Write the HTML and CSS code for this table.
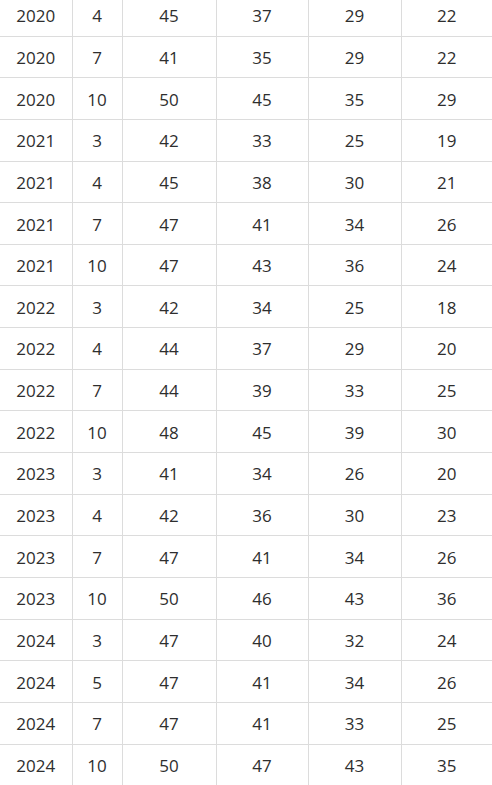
FILE: index.html
```html
<!DOCTYPE html>
<html>
<head>
<meta charset="utf-8">
<link rel="stylesheet" href="styles.css">
</head>
<body>
<table class="data">
<colgroup>
<col class="c1"><col class="c2"><col class="c3"><col class="c4"><col class="c5"><col class="c6">
</colgroup>
<tbody>
<tr><td>2020</td><td>4</td><td>45</td><td>37</td><td>29</td><td>22</td></tr>
<tr><td>2020</td><td>7</td><td>41</td><td>35</td><td>29</td><td>22</td></tr>
<tr><td>2020</td><td>10</td><td>50</td><td>45</td><td>35</td><td>29</td></tr>
<tr><td>2021</td><td>3</td><td>42</td><td>33</td><td>25</td><td>19</td></tr>
<tr><td>2021</td><td>4</td><td>45</td><td>38</td><td>30</td><td>21</td></tr>
<tr><td>2021</td><td>7</td><td>47</td><td>41</td><td>34</td><td>26</td></tr>
<tr><td>2021</td><td>10</td><td>47</td><td>43</td><td>36</td><td>24</td></tr>
<tr><td>2022</td><td>3</td><td>42</td><td>34</td><td>25</td><td>18</td></tr>
<tr><td>2022</td><td>4</td><td>44</td><td>37</td><td>29</td><td>20</td></tr>
<tr><td>2022</td><td>7</td><td>44</td><td>39</td><td>33</td><td>25</td></tr>
<tr><td>2022</td><td>10</td><td>48</td><td>45</td><td>39</td><td>30</td></tr>
<tr><td>2023</td><td>3</td><td>41</td><td>34</td><td>26</td><td>20</td></tr>
<tr><td>2023</td><td>4</td><td>42</td><td>36</td><td>30</td><td>23</td></tr>
<tr><td>2023</td><td>7</td><td>47</td><td>41</td><td>34</td><td>26</td></tr>
<tr><td>2023</td><td>10</td><td>50</td><td>46</td><td>43</td><td>36</td></tr>
<tr><td>2024</td><td>3</td><td>47</td><td>40</td><td>32</td><td>24</td></tr>
<tr><td>2024</td><td>5</td><td>47</td><td>41</td><td>34</td><td>26</td></tr>
<tr><td>2024</td><td>7</td><td>47</td><td>41</td><td>33</td><td>25</td></tr>
<tr><td>2024</td><td>10</td><td>50</td><td>47</td><td>43</td><td>35</td></tr>
</tbody>
</table>
</body>
</html>
```
FILE: styles.css
```css
html, body {
  margin: 0;
  padding: 0;
  background: #ffffff;
  overflow: hidden;
}
.data {
  border-collapse: collapse;
  table-layout: fixed;
  width: 492px;
  margin-top: -5px;
  font-family: "Open Sans", "Noto Sans", sans-serif;
  font-size: 17px;
  color: #2e2e2e;
}
.c1 { width: 72px; }
.c2 { width: 50px; }
.c3 { width: 94px; }
.c4 { width: 92px; }
.c5 { width: 93px; }
.c6 { width: 91px; }
.data td {
  height: 38.65px;
  padding: 2px 0 0 0;
  text-align: center;
  vertical-align: middle;
  border-bottom: 1px solid #dcdcdc;
  border-right: 1px solid #dcdcdc;
  line-height: 20px;
}
.data td:last-child {
  border-right: none;
}
```
